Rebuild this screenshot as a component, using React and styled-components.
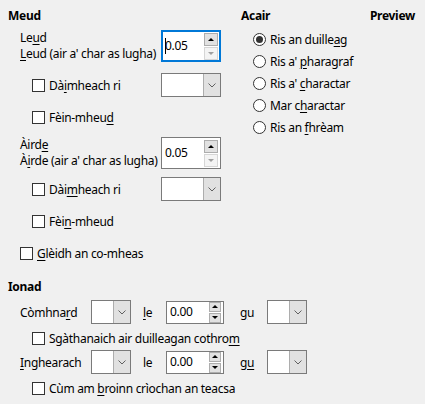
import React from "react";
import styled, { createGlobalStyle } from "styled-components";

const GlobalStyle = createGlobalStyle`
  html, body {
    margin: 0;
    padding: 0;
    background: #f0f0f0;
  }
  body {
    font-family: "Noto Sans", "Open Sans", sans-serif;
    font-size: 12px;
    letter-spacing: -0.3px;
    color: #000;
  }
`;

const Page = styled.div`
  width: 425px;
  height: 404px;
  background: #f0f0f0;
  overflow: hidden;
`;

const Top = styled.div`
  display: flex;
`;

const LeftCol = styled.div`
  width: 241px;
  padding-left: 8px;
  box-sizing: border-box;
`;

const RightCol = styled.div`
  flex: 1;
  padding-right: 10px;
`;

const Heading = styled.div`
  font-weight: bold;
  line-height: 16px;
  margin-top: ${(p) => p.$top || 8}px;
`;

const HeadRow = styled.div`
  display: flex;
  justify-content: space-between;
`;

const U = styled.span`
  text-decoration: underline;
  text-underline-offset: 2px;
`;

const Fields = styled.div`
  display: flex;
  flex-direction: column;
  gap: 8px;
  margin-top: 6px;
  padding-left: 12px;
`;

const Row = styled.div`
  display: flex;
  align-items: center;
  min-height: 24px;
  margin-top: ${(p) => p.$top || 0}px;
`;

const LabelStack = styled.div`
  width: 141px;
  display: flex;
  flex-direction: column;
  line-height: 16px;
  white-space: nowrap;
`;

const CheckCell = styled.label`
  display: flex;
  align-items: center;
  gap: 4px;
  width: ${(p) => (p.$w ? p.$w + "px" : "auto")};
  padding-left: ${(p) => p.$indent || 0}px;
  box-sizing: border-box;
  white-space: nowrap;
`;

const Box = styled.span`
  width: 13px;
  height: 13px;
  box-sizing: border-box;
  border: 1px solid #333;
  background: #fff;
  flex: none;
`;

const Radio = styled.span`
  width: 13px;
  height: 13px;
  box-sizing: border-box;
  border: 1px solid #333;
  border-radius: 50%;
  background: #fff;
  flex: none;
  display: flex;
  align-items: center;
  justify-content: center;

  &::after {
    content: "";
    width: 7px;
    height: 7px;
    border-radius: 50%;
    background: #333;
    display: ${(p) => (p.$on ? "block" : "none")};
  }
`;

const RadioList = styled.div`
  margin-top: 4px;
  padding-left: 12px;
  display: flex;
  flex-direction: column;
`;

const RadioRow = styled.label`
  display: flex;
  align-items: center;
  gap: 4px;
  height: 22px;
  white-space: nowrap;
`;

const SpinWrap = styled.div`
  position: relative;
  width: ${(p) => p.$w}px;
  height: ${(p) => p.$h}px;
  box-sizing: border-box;
  background: #fff;
  border: 1px solid ${(p) => (p.$focus ? "#0078d7" : "#7a7a7a")};
  box-shadow: ${(p) => (p.$focus ? "inset 0 0 0 1px #0078d7" : "none")};
  display: flex;
  align-items: center;
  padding: 0 2px 0 3px;
`;

const SpinText = styled.span`
  flex: 1;
  line-height: 16px;
`;

const Caret = styled.span`
  position: absolute;
  left: 3px;
  top: 50%;
  margin-top: -8px;
  width: 1px;
  height: 16px;
  background: #000;
`;

const SpinButtons = styled.div`
  display: flex;
  flex-direction: column;
  gap: 1px;
  width: ${(p) => p.$bw}px;
`;

const SpinBtn = styled.div`
  height: ${(p) => p.$bh}px;
  box-sizing: border-box;
  border: 1px solid ${(p) => (p.$off ? "#d6d6d6" : "#adadad")};
  background: ${(p) => (p.$off ? "#f4f4f4" : "#e1e1e1")};
  display: flex;
  align-items: center;
  justify-content: center;

  &::after {
    content: "";
    width: 0;
    height: 0;
    border-left: 3px solid transparent;
    border-right: 3px solid transparent;
    ${(p) =>
      p.$down
        ? `border-top: 3px solid ${p.$off ? "#a0a0a0" : "#000"};`
        : `border-bottom: 3px solid ${p.$off ? "#a0a0a0" : "#000"};`}
  }
`;

const ComboWrap = styled.div`
  width: ${(p) => p.$w}px;
  height: 24px;
  box-sizing: border-box;
  border: 1px solid #7a7a7a;
  background: #fff;
  display: flex;
  justify-content: flex-end;
  flex: none;
`;

const ComboBtn = styled.div`
  width: 16px;
  background: #e1e1e1;
  border-left: 1px solid #adadad;
  display: flex;
  align-items: center;
  justify-content: center;
`;

const Ionad = styled.div`
  margin-top: 5px;
  padding-left: 20px;
  display: flex;
  flex-direction: column;
`;

const Cell = styled.div`
  width: ${(p) => p.$w}px;
  padding-left: ${(p) => p.$pl || 0}px;
  box-sizing: border-box;
  white-space: nowrap;
  flex: none;
`;

const CheckLine = styled.div`
  display: flex;
  align-items: center;
  height: 26px;
  padding-top: 2px;
  box-sizing: border-box;
`;

function Spin({ value, w, h, focus, downOff }) {
  const bh = h > 28 ? 13 : 10;
  return (
    <SpinWrap $w={w} $h={h} $focus={focus}>
      {focus && <Caret />}
      <SpinText>{value}</SpinText>
      <SpinButtons $bw={h > 28 ? 14 : 12}>
        <SpinBtn $bh={bh} />
        <SpinBtn $bh={bh} $down $off={downOff} />
      </SpinButtons>
    </SpinWrap>
  );
}

function Combo({ w }) {
  return (
    <ComboWrap $w={w}>
      <ComboBtn>
        <svg width="8" height="5" viewBox="0 0 8 5">
          <polyline points="0.5,0.5 4,4 7.5,0.5" fill="none" stroke="#606060" strokeWidth="1" />
        </svg>
      </ComboBtn>
    </ComboWrap>
  );
}

function Check({ children, indent, w }) {
  return (
    <CheckCell $indent={indent} $w={w}>
      <Box />
      <span>{children}</span>
    </CheckCell>
  );
}

export default function App() {
  return (
    <Page>
      <GlobalStyle />
      <Top>
        <LeftCol>
          <Heading>Meud</Heading>
          <Fields>
            <Row>
              <LabelStack>
                <span>
                  Le<U>u</U>d
                </span>
                <span>
                  <U>L</U>eud (air a' char as lugha)
                </span>
              </LabelStack>
              <Spin value="0.05" w={60} h={32} focus downOff />
            </Row>
            <Row $top={3}>
              <Check indent={12} w={141}>
                Dà<U>i</U>mheach ri
              </Check>
              <Combo w={60} />
            </Row>
            <Row>
              <Check indent={12}>
                Fèin-mheu<U>d</U>
              </Check>
            </Row>
            <Row>
              <LabelStack>
                <span>
                  Àird<U>e</U>
                </span>
                <span>
                  À<U>i</U>rde (air a' char as lugha)
                </span>
              </LabelStack>
              <Spin value="0.05" w={60} h={32} downOff />
            </Row>
            <Row>
              <Check indent={12} w={141}>
                Dài<U>m</U>heach ri
              </Check>
              <Combo w={60} />
            </Row>
            <Row>
              <Check indent={12}>
                Fèi<U>n</U>-mheud
              </Check>
            </Row>
            <Row>
              <Check>
                <U>G</U>lèidh an co-mheas
              </Check>
            </Row>
          </Fields>
        </LeftCol>
        <RightCol>
          <HeadRow>
            <Heading>Acair</Heading>
            <Heading>Preview</Heading>
          </HeadRow>
          <RadioList>
            <RadioRow>
              <Radio $on />
              <span>
                Ris an duille<U>a</U>g
              </span>
            </RadioRow>
            <RadioRow>
              <Radio />
              <span>
                Ris a' <U>p</U>haragraf
              </span>
            </RadioRow>
            <RadioRow>
              <Radio />
              <span>
                Ris a' <U>c</U>haractar
              </span>
            </RadioRow>
            <RadioRow>
              <Radio />
              <span>
                Mar c<U>h</U>aractar
              </span>
            </RadioRow>
            <RadioRow>
              <Radio />
              <span>
                Ris an <U>f</U>hrèam
              </span>
            </RadioRow>
          </RadioList>
        </RightCol>
      </Top>
      <LeftCol>
        <Heading $top={14}>Ionad</Heading>
      </LeftCol>
      <Ionad>
        <Row>
          <Cell $w={71}>
            Còmhna<U>r</U>d
          </Cell>
          <Combo w={40} />
          <Cell $w={35} $pl={12}>
            <U>l</U>e
          </Cell>
          <Spin value="0.00" w={58} h={23} />
          <Cell $w={43} $pl={16}>
            <U>g</U>u
          </Cell>
          <Combo w={40} />
        </Row>
        <CheckLine>
          <Check indent={12}>
            Sgàthanaich air duilleagan cothro<U>m</U>
          </Check>
        </CheckLine>
        <Row>
          <Cell $w={71}>
            <U>I</U>nghearach
          </Cell>
          <Combo w={40} />
          <Cell $w={35} $pl={12}>
            le
          </Cell>
          <Spin value="0.00" w={58} h={23} />
          <Cell $w={43} $pl={16}>
            g<U>u</U>
          </Cell>
          <Combo w={40} />
        </Row>
        <CheckLine>
          <Check indent={12}>
            Cùm am <U>b</U>roinn crìochan an teacsa
          </Check>
        </CheckLine>
      </Ionad>
    </Page>
  );
}
